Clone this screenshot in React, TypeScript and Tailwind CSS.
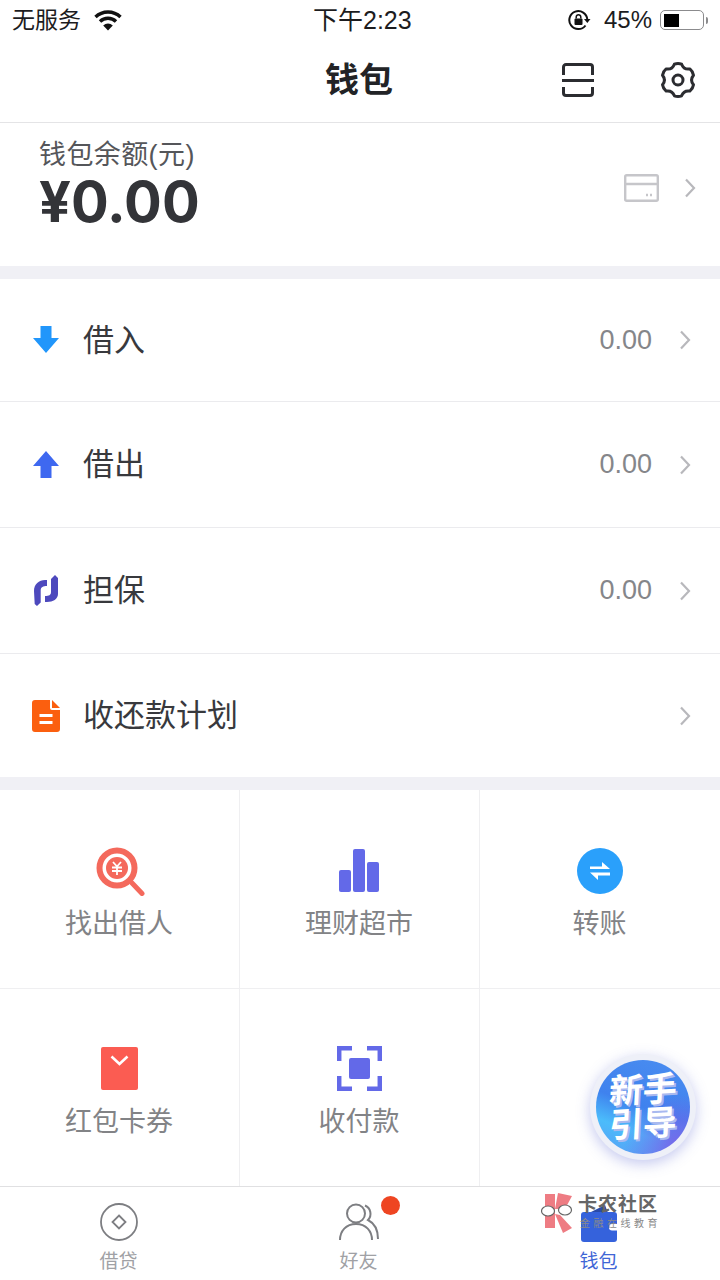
import React from "react";

const font = "font-['Liberation_Sans','Noto_Sans_CJK_SC',sans-serif]";

// six lobed gear outline, center 18,18
function gearPath() {
  const pt = (deg: number, r: number) => {
    const a = (deg * Math.PI) / 180;
    return `${(18 + r * Math.cos(a)).toFixed(2)} ${(18 + r * Math.sin(a)).toFixed(2)}`;
  };
  let d = "";
  for (let k = 0; k < 6; k++) {
    const c = -90 + k * 60;
    d += `${k === 0 ? "M" : "L"}${pt(c - 13, 16.2)} Q${pt(c, 17.2)} ${pt(c + 13, 16.2)} Q${pt(c + 30, 11.6)} `;
    d += pt(c + 47, 16.2);
  }
  return d + "Z";
}

function Chevron({ className = "" }: { className?: string }) {
  return (
    <svg width="12" height="20" viewBox="0 0 12 20" fill="none" className={className}>
      <path d="M2 1.5 10 10 2 18.5" stroke="#b8b8bc" strokeWidth="2.2" />
    </svg>
  );
}

function Row({ icon, label, value, h }: { icon: React.ReactNode; label: string; value?: string; h: string }) {
  return (
    <div className={`flex items-center pl-[32px] pr-[29px] ${h}`}>
      <div className="w-[28px] flex justify-center">{icon}</div>
      <span className="ml-[23px] text-[31px] leading-none text-[#38393d]">{label}</span>
      {value && <span className="ml-auto text-[27px] leading-none text-[#85868a]">{value}</span>}
      <Chevron className={value ? "ml-[27px]" : "ml-auto"} />
    </div>
  );
}

function Cell({ icon, label, border, second }: { icon: React.ReactNode; label: string; border?: boolean; second?: boolean }) {
  return (
    <div className={`flex flex-col items-center ${border ? "border-r border-[#efeff1]" : ""}`}>
      <div className={`h-[50px] flex items-center justify-center ${second ? "mt-[54px]" : "mt-[56px]"}`}>{icon}</div>
      <span className={`pr-[1px] text-[27px] leading-[34px] text-[#828386] ${second ? "mt-[12px]" : "mt-[11px]"}`}>{label}</span>
    </div>
  );
}

function Tab({ icon, label, active }: { icon: React.ReactNode; label: string; active?: boolean }) {
  return (
    <div className="flex flex-col items-center pr-[3px]">
      <div className="h-[40px] mt-[15px] flex items-center justify-center">{icon}</div>
      <span className={`mt-[8px] text-[19px] leading-[24px] ${active ? "text-[#3f66d6]" : "text-[#a0a1a5]"}`}>{label}</span>
    </div>
  );
}

export default function App() {
  return (
    <div className={`relative w-[720px] h-[1280px] overflow-hidden bg-white flex flex-col ${font}`}>
      {/* Status bar */}
      <div className="h-[40px] shrink-0 relative flex items-center px-[12px] text-[#1c1c1e]">
        <span className="text-[23px] leading-none">无服务</span>
        <svg width="28" height="21" viewBox="0 0 28 21" className="ml-[13px]" fill="none">
          <path d="M14 20.5 9.2 15.4a7 7 0 0 1 9.6 0Z" fill="#111" />
          <path d="M6 11.5a11.5 11.5 0 0 1 16 0" stroke="#111" strokeWidth="3.4" />
          <path d="M1.5 7a18 18 0 0 1 25 0" stroke="#111" strokeWidth="3.4" />
        </svg>
        <span className="absolute left-[313px] top-[7px] text-[25px] leading-[26px]">下午2:23</span>
        <svg width="23" height="22" viewBox="0 0 23 22" className="ml-auto mr-[13px]" fill="none">
          <path d="M17.5 16.5a9 9 0 1 1 1.8-6" stroke="#111" strokeWidth="2" />
          <path d="M16 10h6.5l-3.2 4Z" fill="#111" />
          <rect x="6.5" y="9.5" width="8" height="6.5" rx="1" fill="#111" />
          <path d="M8.2 9.5V8a2.3 2.3 0 0 1 4.6 0v1.5" stroke="#111" strokeWidth="1.5" />
        </svg>
        <span className="text-[24px] leading-none">45%</span>
        <div className="ml-[8px] w-[44px] h-[20px] rounded-[5px] border-[1.5px] border-[#8b8b8d] p-[2.5px]">
          <div className="h-full w-[15px] bg-black" />
        </div>
        <div className="ml-[2px] h-[7px] w-[2px] rounded-r bg-[#8b8b8d]" />
      </div>

      {/* Nav */}
      <div className="h-[83px] shrink-0 relative flex items-center justify-center border-b border-[#e4e4e6]">
        <span className="text-[34px] leading-none font-bold text-[#222326] mb-[3px] pr-[2px]">钱包</span>
        <svg width="32" height="34" viewBox="0 0 32 34" fill="none" className="absolute left-[562px] top-[23px]" stroke="#2b2c30" strokeWidth="3">
          <path d="M1.5 12V4A2.5 2.5 0 0 1 4 1.5h24A2.5 2.5 0 0 1 30.5 4v8" />
          <path d="M1.5 24v6A2.5 2.5 0 0 0 4 32.5h24a2.5 2.5 0 0 0 2.5-2.5v-6" />
          <path d="M0 17.5h32" />
        </svg>
        <svg width="36" height="36" viewBox="0 0 36 36" fill="none" className="absolute left-[660px] top-[22px]" stroke="#2b2c30" strokeWidth="3" strokeLinejoin="round">
          <path d={gearPath()} />
          <circle cx="18" cy="18" r="5" />
        </svg>
      </div>

      {/* Balance */}
      <div className="h-[143px] shrink-0 flex pl-[39px] pr-[24px]">
        <div className="flex flex-col">
          <span className="mt-[16px] text-[27px] leading-[32px] text-[#55565a] tracking-[0.4px]">钱包余额(元)</span>
          <span className="-mt-[1px] text-[56px] leading-[64px] font-bold text-[#333438] font-['Inter',sans-serif]">¥0.00</span>
        </div>
        <div className="ml-auto flex items-center mb-[13px]">
          <svg width="35" height="28" viewBox="0 0 35 28" fill="none" stroke="#c6c6ca" strokeWidth="2.4">
            <rect x="1.2" y="1.2" width="32.6" height="25.6" rx="1.5" />
            <path d="M1 10h33" />
            <path d="M22 21h2M26 21h2" />
          </svg>
          <Chevron className="ml-[25px]" />
        </div>
      </div>

      <div className="h-[13px] shrink-0 bg-[#f0f0f5]" />

      {/* List */}
      <Row
        h="h-[123px] border-b border-[#ebebee]"
        label="借入"
        value="0.00"
        icon={
          <svg width="26" height="28" viewBox="0 0 26 28">
            <path d="M7.5 0h11v12H26L13 27 0 12h7.5Z" fill="#2196fb" />
          </svg>
        }
      />
      <Row
        h="h-[126px] border-b border-[#ebebee]"
        label="借出"
        value="0.00"
        icon={
          <svg width="26" height="28" viewBox="0 0 26 28">
            <path d="M7.5 27h11V15H26L13 0 0 15h7.5Z" fill="#3e68f0" />
          </svg>
        }
      />
      <Row
        h="h-[126px] border-b border-[#ebebee]"
        label="担保"
        value="0.00"
        icon={
          <svg width="25" height="32" viewBox="0 0 25 32" fill="#4d49bd">
            <path d="M.7 29 0 16C0 9 5 5 11 5h2v6c-4 0-6 1-6.3 4v12.500L3 31Z" />
            <path d="M21 0l3 3v16c0 5-5 8-11 8h-2v-6c4 0 6-1 6-4V4Z" />
          </svg>
        }
      />
      <Row
        h="h-[123px]"
        label="收还款计划"
        icon={
          <svg width="28" height="32" viewBox="0 0 28 32">
            <path d="M3 0h15v8a2 2 0 0 0 2 2h8v19a3 3 0 0 1-3 3H3a3 3 0 0 1-3-3V3a3 3 0 0 1 3-3Z" fill="#fb5f0f" />
            <path d="M20 0 28 8h-8Z" fill="#fb5f0f" />
            <path d="M7.5 14h13v3h-13zM7.5 21h13v3h-13z" fill="#fff" />
          </svg>
        }
      />

      <div className="h-[13px] shrink-0 bg-[#f0f0f5]" />

      {/* Grid */}
      <div className="grid grid-cols-3 shrink-0 border-b border-[#efeff1] h-[199px]">
        <Cell
          border
          label="找出借人"
          icon={
            <svg width="50" height="50" viewBox="0 0 50 50" fill="none">
              <circle cx="22" cy="22" r="17.5" stroke="#f4695c" strokeWidth="6" />
              <circle cx="22" cy="22" r="11" fill="#f4695c" />
              <path d="M37 37 47 47.5" stroke="#f4695c" strokeWidth="5" strokeLinecap="round" />
              <path d="M18 16l4 4.5 4-4.500M17 21.5h10M17 25h10M22 21v8" stroke="#fff" strokeWidth="1.8" />
            </svg>
          }
        />
        <Cell
          border
          label="理财超市"
          icon={
            <svg width="44" height="44" viewBox="0 0 44 44" fill="#6369e8">
              <rect x="1" y="21" width="12" height="22" rx="2" />
              <rect x="15" y="0" width="12" height="43" rx="2" />
              <rect x="29" y="13" width="12" height="30" rx="2" />
            </svg>
          }
        />
        <Cell
          label="转账"
          icon={
            <svg width="46" height="46" viewBox="0 0 46 46">
              <circle cx="23" cy="23" r="23" fill="#2aa0fb" />
              <path d="M13 18.5h12V14l8 7H13Z" fill="#fff" />
              <path d="M33 24.5v3H21V32l-8-7.500Z" fill="#fff" />
            </svg>
          }
        />
      </div>
      <div className="grid grid-cols-3 shrink-0 h-[197px]">
        <Cell
          border
          second
          label="红包卡券"
          icon={
            <svg width="37" height="43" viewBox="0 0 37 43">
              <rect width="37" height="43" rx="2" fill="#fb5c52" />
              <path d="M10.5 9.5 18.500 17l8-7.500" stroke="#fff" strokeWidth="2.6" fill="none" />
            </svg>
          }
        />
        <Cell
          border
          second
          label="收付款"
          icon={
            <svg width="45" height="45" viewBox="0 0 45 45" fill="none">
              <rect x="12" y="12" width="21" height="21" rx="2" fill="#6369e8" />
              <path d="M2.2 15V2.2H15M30 2.2h12.8V15M42.8 30v12.8H30M15 42.8H2.2V30" stroke="#6369e8" strokeWidth="4.5" />
            </svg>
          }
        />
        <div />
      </div>

      {/* Tab bar */}
      <div className="flex-1 grid grid-cols-3 border-t border-[#e0e0e2] bg-white">
        <Tab
          label="借贷"
          icon={
            <svg width="38" height="38" viewBox="0 0 38 38" fill="none" stroke="#7d7e82" strokeWidth="1.8">
              <circle cx="19" cy="19" r="18" />
              <path d="M19 12.5 25.5 19 19 25.5 12.5 19Z" />
            </svg>
          }
        />
        <div className="relative">
          <Tab
            label="好友"
            icon={
              <svg width="40" height="38" viewBox="0 0 40 38" fill="none" stroke="#7d7e82" strokeWidth="2">
                <circle cx="17" cy="10.5" r="9" />
                <path d="M1 37c0-9 6-16 16-16s16 7 16 16" />
                <path d="M26 2.5a9 9 0 0 1 3 14.500c6 3 10 10 10 19" />
              </svg>
            }
          />
          <div className="absolute left-[141px] top-[9px] h-[19px] w-[19px] rounded-full bg-[#ee4522]" />
        </div>
        <Tab
          active
          label="钱包"
          icon={
            <svg width="36" height="38" viewBox="0 0 36 38" className="mt-[2px]">
              <path d="M8 9 24 1l3 8Z" fill="#2a4aa8" />
              <path d="M3 8h30a3 3 0 0 1 3 3v24a3 3 0 0 1-3 3H3a3 3 0 0 1-3-3V11a3 3 0 0 1 3-3Z" fill="#3562dc" />
              <rect x="28" y="20" width="10" height="6.5" rx="3" fill="#fff" />
            </svg>
          }
        />
      </div>

      {/* Guide button */}
      <div className="absolute left-[590px] top-[1054px] h-[106px] w-[106px] rounded-full bg-[#eef0f8] p-[6px] shadow-[0_4px_14px_rgba(90,100,210,0.35)]">
        <div className="h-full w-full rounded-full bg-[radial-gradient(circle_at_88%_95%,#7a5ee8_0%,transparent_45%),linear-gradient(200deg,#4a8df0_0%,#3f82ee_50%,#4bbcfb_72%,#5b9cf4_100%)] flex flex-col items-center justify-center">
          <span className="text-[34px] leading-[34px] font-bold text-white -rotate-3 -skew-x-6 [text-shadow:2px_2px_0_#a9b9ef]">新手</span>
          <span className="text-[34px] leading-[34px] font-bold text-white -rotate-3 -skew-x-6 [text-shadow:2px_2px_0_#a9b9ef]">引导</span>
        </div>
      </div>

      {/* Watermark */}
      <div className="absolute left-[541px] top-[1192px] flex items-start">
        <svg width="37" height="42" viewBox="0 0 37 42">
          <path d="M4 2h10v34H4Z" fill="#ee7c83" />
          <path d="M17 1l14 3-7 13H14Z" fill="#ee7c83" />
          <path d="M14 22l5 1 12 13-9 5Z" fill="#ee7c83" />
          <ellipse cx="7" cy="19" rx="6.5" ry="5" fill="#fff" stroke="#666" strokeWidth="1.2" />
          <ellipse cx="24" cy="18" rx="6.5" ry="5" fill="#fff" stroke="#666" strokeWidth="1.2" />
        </svg>
        <div className="flex flex-col mt-[2px]">
          <span className="text-[19px] leading-[22px] font-bold text-[#666] tracking-[1px]">卡农社区</span>
          <span className="text-[10px] leading-[14px] text-[#8a8a8a] tracking-[3.5px] ml-[2px] mt-[1px]">金融在线教育</span>
        </div>
      </div>
    </div>
  );
}
